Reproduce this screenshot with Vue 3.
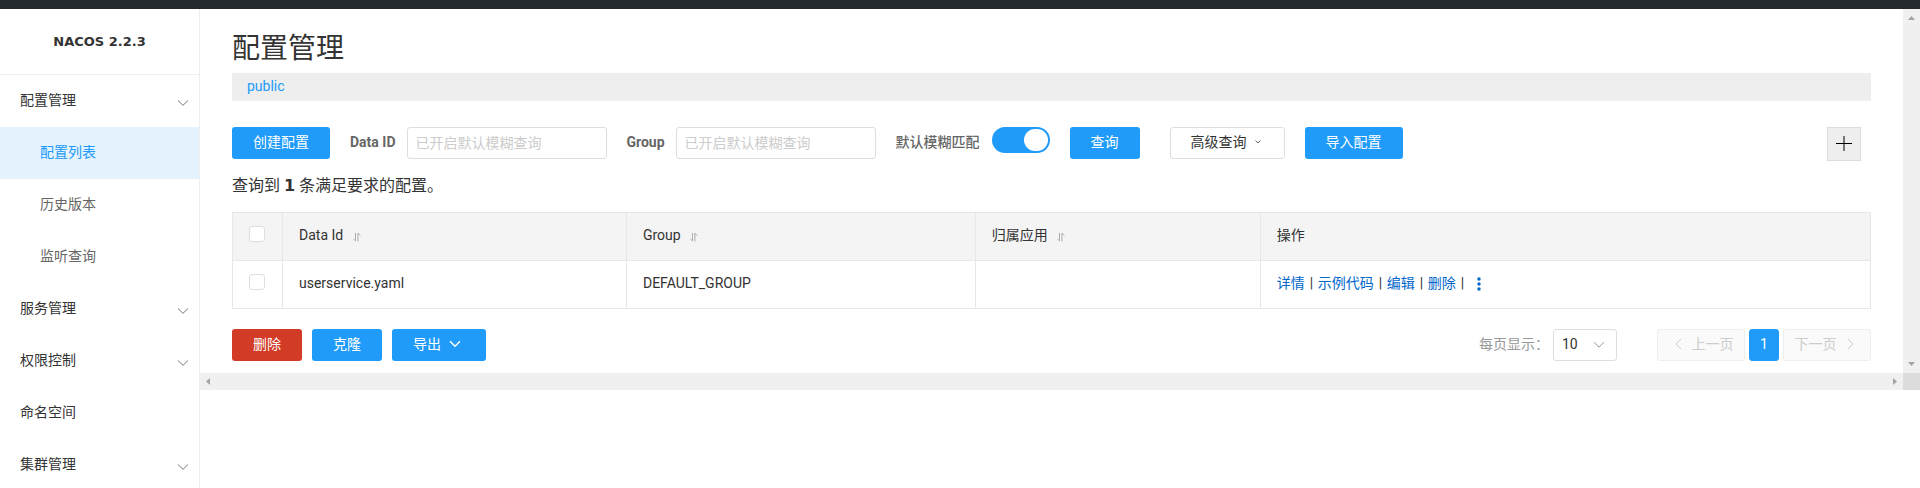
<script setup>
import { ref } from 'vue'

const menu = [
  { label: '配置管理', expandable: true },
  { label: '配置列表', sub: true, active: true },
  { label: '历史版本', sub: true },
  { label: '监听查询', sub: true },
  { label: '服务管理', expandable: true },
  { label: '权限控制', expandable: true },
  { label: '命名空间' },
  { label: '集群管理', expandable: true },
]
const rows = [{ dataId: 'userservice.yaml', group: 'DEFAULT_GROUP', app: '' }]
const actions = ['详情', '示例代码', '编辑', '删除']
const fuzzy = ref(true)
const dataId = ref('')
const group = ref('')
const pageSize = ref('10')
</script>

<template>
  <div class="page">
    <header class="topbar"></header>
    <div class="body">
      <aside class="sidebar">
        <h1 class="brand">NACOS 2.2.3</h1>
        <nav>
          <a
            v-for="item in menu"
            :key="item.label"
            href="#"
            class="item"
            :class="{ sub: item.sub, active: item.active }"
          >
            <span>{{ item.label }}</span>
            <svg v-if="item.expandable" class="chevron" width="12" height="8" viewBox="0 0 12 8">
              <path d="M1 1.5 6 6.3 11 1.5" />
            </svg>
          </a>
        </nav>
      </aside>

      <div class="frame">
        <main class="content">
          <h2 class="title">配置管理</h2>
          <div class="namespace"><a href="#">public</a></div>

          <form class="toolbar" @submit.prevent>
            <button type="button" class="btn primary">创建配置</button>
            <div class="field">
              <label for="data-id">Data ID</label>
              <input id="data-id" v-model="dataId" class="text" type="text" placeholder="已开启默认模糊查询" />
            </div>
            <div class="field">
              <label for="group">Group</label>
              <input id="group" v-model="group" class="text" type="text" placeholder="已开启默认模糊查询" />
            </div>
            <div class="field toggle">
              <label for="fuzzy">默认模糊匹配</label>
              <input id="fuzzy" v-model="fuzzy" class="switch" type="checkbox" role="switch" />
            </div>
            <button type="submit" class="btn primary">查询</button>
            <button type="button" class="btn normal">
              高级查询
              <svg class="small" width="6" height="4" viewBox="0 0 6 4"><path d="M.5 .5 3 3 5.5 .5" /></svg>
            </button>
            <button type="button" class="btn primary">导入配置</button>
            <button type="button" class="add" aria-label="新增">
              <svg width="16" height="16" viewBox="0 0 16 16"><path d="M0 7.5H16M8 0V15" /></svg>
            </button>
          </form>

          <p class="summary">查询到 <strong>1</strong> 条满足要求的配置。</p>

          <table class="table">
            <colgroup>
              <col class="c-check" /><col class="c-id" /><col class="c-group" /><col class="c-app" /><col />
            </colgroup>
            <thead>
              <tr>
                <th class="check"><input type="checkbox" aria-label="全选" /></th>
                <th v-for="name in ['Data Id', 'Group', '归属应用']" :key="name">
                  {{ name }}
                  <svg class="sort" width="8" height="10" viewBox="0 0 8 10">
                    <path d="M.5 7 2.5 8.8V1M4.9 9.5V1.2L7.3 3.6" />
                  </svg>
                </th>
                <th>操作</th>
              </tr>
            </thead>
            <tbody>
              <tr v-for="row in rows" :key="row.dataId">
                <td class="check"><input type="checkbox" :aria-label="row.dataId" /></td>
                <td>{{ row.dataId }}</td>
                <td>{{ row.group }}</td>
                <td>{{ row.app }}</td>
                <td>
                  <div class="actions">
                    <template v-for="action in actions" :key="action">
                      <a href="#">{{ action }}</a><span class="bar">|</span>
                    </template>
                    <a href="#" class="more" aria-label="更多">
                      <svg width="4" height="14" viewBox="0 0 4 14">
                        <circle cx="2" cy="2" r="1.7" /><circle cx="2" cy="7" r="1.7" /><circle cx="2" cy="12" r="1.7" />
                      </svg>
                    </a>
                  </div>
                </td>
              </tr>
            </tbody>
          </table>

          <div class="footer">
            <button type="button" class="btn danger">删除</button>
            <button type="button" class="btn primary">克隆</button>
            <button type="button" class="btn primary">
              导出
              <svg class="drop" width="12" height="8" viewBox="0 0 12 8"><path d="M1 1.2 6 6.2 11 1.2" /></svg>
            </button>
            <div class="pagination">
              <label for="page-size">每页显示：</label>
              <div class="select">
                <select id="page-size" v-model="pageSize">
                  <option>10</option>
                  <option>20</option>
                  <option>30</option>
                </select>
                <svg width="12" height="8" viewBox="0 0 12 8"><path d="M1 1.2 6 6.2 11 1.2" /></svg>
              </div>
              <button type="button" class="pager prev" disabled>
                <svg width="7" height="12" viewBox="0 0 7 12"><path d="M6 1 1 6 6 11" /></svg>
                上一页
              </button>
              <button type="button" class="pager current">1</button>
              <button type="button" class="pager" disabled>
                下一页
                <svg width="7" height="12" viewBox="0 0 7 12"><path d="M1 1 6 6 1 11" /></svg>
              </button>
            </div>
          </div>
        </main>
        <div class="track vertical">
          <svg width="7" height="4" viewBox="0 0 7 4"><path d="M0 4 3.5 0 7 4Z" /></svg>
          <svg width="7" height="4" viewBox="0 0 7 4"><path d="M0 0 3.5 4 7 0Z" /></svg>
        </div>
        <div class="track">
          <svg width="4" height="7" viewBox="0 0 4 7"><path d="M4 0 0 3.5 4 7Z" /></svg>
          <svg width="4" height="7" viewBox="0 0 4 7"><path d="M0 0 4 3.5 0 7Z" /></svg>
        </div>
        <div class="corner"></div>
      </div>
    </div>
  </div>
</template>

<style>
body {
  margin: 0;
}
</style>

<style scoped>
* {
  box-sizing: border-box;
}
.page {
  display: flex;
  flex-direction: column;
  height: 100vh;
  overflow: hidden;
  background: #fff;
  color: #333;
  font: 14px/20px Roboto, "Noto Sans CJK SC", sans-serif;
}
a {
  text-decoration: none;
}
button,
input,
select {
  margin: 0;
  font: inherit;
}
svg {
  display: block;
  flex: none;
  fill: none;
  stroke: currentColor;
}
.topbar {
  flex: none;
  height: 9px;
  background: #252a2f;
}
.body {
  display: flex;
  flex: 1;
  min-height: 0;
}
.sidebar {
  flex: none;
  width: 200px;
  overflow: hidden;
  border-right: 1px solid #eee;
}
.brand {
  margin: 0;
  height: 66px;
  border-bottom: 1px solid #eee;
  font: bold 13px/66px "DejaVu Sans", sans-serif;
  text-align: center;
}
.item {
  display: flex;
  align-items: center;
  justify-content: space-between;
  height: 52px;
  padding: 0 10px 2px 20px;
  color: #333;
}
.item.sub {
  padding-left: 40px;
  color: #666;
}
.item.active {
  background: #e4f3fe;
  color: #209bfa;
}
.chevron {
  margin-top: 5px;
  color: #777;
}
.frame {
  display: grid;
  flex: 1;
  grid-template-columns: 1fr 17px;
  align-self: flex-start;
  min-width: 0;
}
.content {
  min-width: 0;
  padding: 20px 32px 12px;
}
.title {
  margin: 0;
  font-size: 28px;
  font-weight: 400;
  line-height: 40px;
}
.namespace {
  height: 28px;
  margin-top: 4px;
  padding: 0 15px;
  background: #eee;
  line-height: 26px;
}
.namespace a {
  color: #209bfa;
}
.toolbar {
  display: flex;
  align-items: flex-start;
  gap: 20px;
  margin-top: 26px;
  padding-right: 10px;
}
.btn {
  display: flex;
  align-items: center;
  height: 32px;
  padding: 0 20px 2px;
  border: 1px solid transparent;
  border-radius: 3px;
  color: #fff;
  white-space: nowrap;
}
.primary {
  background: #209bfa;
}
.danger {
  background: #d23c26;
}
.normal {
  margin-left: 10px;
  border-color: #dcdee3;
  background: #fff;
  color: #333;
}
.small {
  margin: 0 3px 0 8px;
  color: #666;
}
.drop {
  margin: 0 4px 0 8px;
  stroke-width: 1.5;
}
.field {
  display: flex;
  gap: 11px;
}
.field label {
  color: #666;
  font-weight: 700;
  line-height: 30px;
  white-space: nowrap;
}
.toggle {
  gap: 12px;
}
.toggle label {
  font-weight: 500;
}
.text {
  width: 200px;
  height: 32px;
  padding: 0 8px;
  border: 1px solid #dcdee3;
  border-radius: 3px;
  background: #fff;
  color: #333;
  outline: none;
}
.text::placeholder {
  color: #ccc;
  opacity: 1;
}
.switch {
  display: flex;
  justify-content: flex-start;
  width: 58px;
  height: 26px;
  padding: 2px;
  border-radius: 13px;
  background: #ccc;
  appearance: none;
}
.switch:checked {
  justify-content: flex-end;
  background: #209bfa;
}
.switch::before {
  width: 24px;
  height: 22px;
  border-radius: 12px;
  background: #fff;
  content: "";
}
.add {
  display: grid;
  place-items: center;
  width: 34px;
  height: 34px;
  margin-left: auto;
  padding: 0;
  border: 1px solid #ddd;
  background: #eee;
  color: #000;
}
.summary {
  margin: 13px 0 14px;
  font-size: 16px;
  line-height: 24px;
}
.summary strong {
  font-family: "DejaVu Sans", sans-serif;
}
.table {
  width: 100%;
  border-collapse: collapse;
  table-layout: fixed;
}
.c-check {
  width: 50px;
}
.c-id {
  width: 21%;
}
.c-group {
  width: 21.3%;
}
.c-app {
  width: 17.4%;
}
th,
td {
  height: 48px;
  padding: 0 16px 4px;
  border: 1px solid #e6e7eb;
  font-weight: 400;
  text-align: left;
}
th {
  background: #f4f4f4;
}
.check input {
  display: block;
  width: 16px;
  height: 16px;
  margin-bottom: 2px;
  border: 1px solid #dcdee3;
  border-radius: 3px;
  background: #fff;
  appearance: none;
}
.sort {
  display: inline-block;
  margin: 0 0 -2px 6px;
  color: #999;
  stroke-width: .8;
}
.actions {
  display: flex;
  align-items: center;
}
.actions a {
  color: #06c;
}
.bar {
  width: 13px;
  text-align: center;
}
.actions .more {
  margin: 2px 0 0 8px;
}
.more svg {
  fill: currentColor;
  stroke: none;
}
.footer {
  display: flex;
  gap: 10px;
  margin-top: 20px;
}
.pagination {
  display: flex;
  gap: 4px;
  margin-left: auto;
}
.pagination label {
  color: #999;
  line-height: 30px;
}
.select {
  display: grid;
  align-items: center;
  width: 64px;
  margin-right: 36px;
  color: #999;
}
.select select,
.select svg {
  grid-area: 1 / 1;
}
.select select {
  width: 100%;
  height: 32px;
  padding: 0 8px 2px;
  border: 1px solid #dcdee3;
  border-radius: 3px;
  background: #fff;
  color: #333;
  appearance: none;
}
.select svg {
  justify-self: end;
  margin-right: 12px;
  pointer-events: none;
}
.pager {
  display: flex;
  align-items: center;
  justify-content: center;
  gap: 10px;
  height: 32px;
  min-width: 30px;
  padding: 0 10px 2px;
  border: 1px solid #eee;
  border-radius: 3px;
  background: #fafafa;
  color: #ccc;
}
.pager:disabled {
  width: 88px;
  padding: 0 16px 2px 10px;
}
.prev:disabled {
  padding: 0 10px 2px 16px;
}
.pager.current {
  border-color: #209bfa;
  background: #209bfa;
  color: #fff;
}
.track {
  display: flex;
  align-items: center;
  justify-content: space-between;
  height: 17px;
  padding: 0 6px;
  background: #f0f0f0;
}
.track.vertical {
  flex-direction: column;
  height: auto;
  padding: 7px 0;
}
.track svg {
  fill: #a3a3a3;
  stroke: none;
}
.corner {
  background: #dcdcdc;
}
</style>
